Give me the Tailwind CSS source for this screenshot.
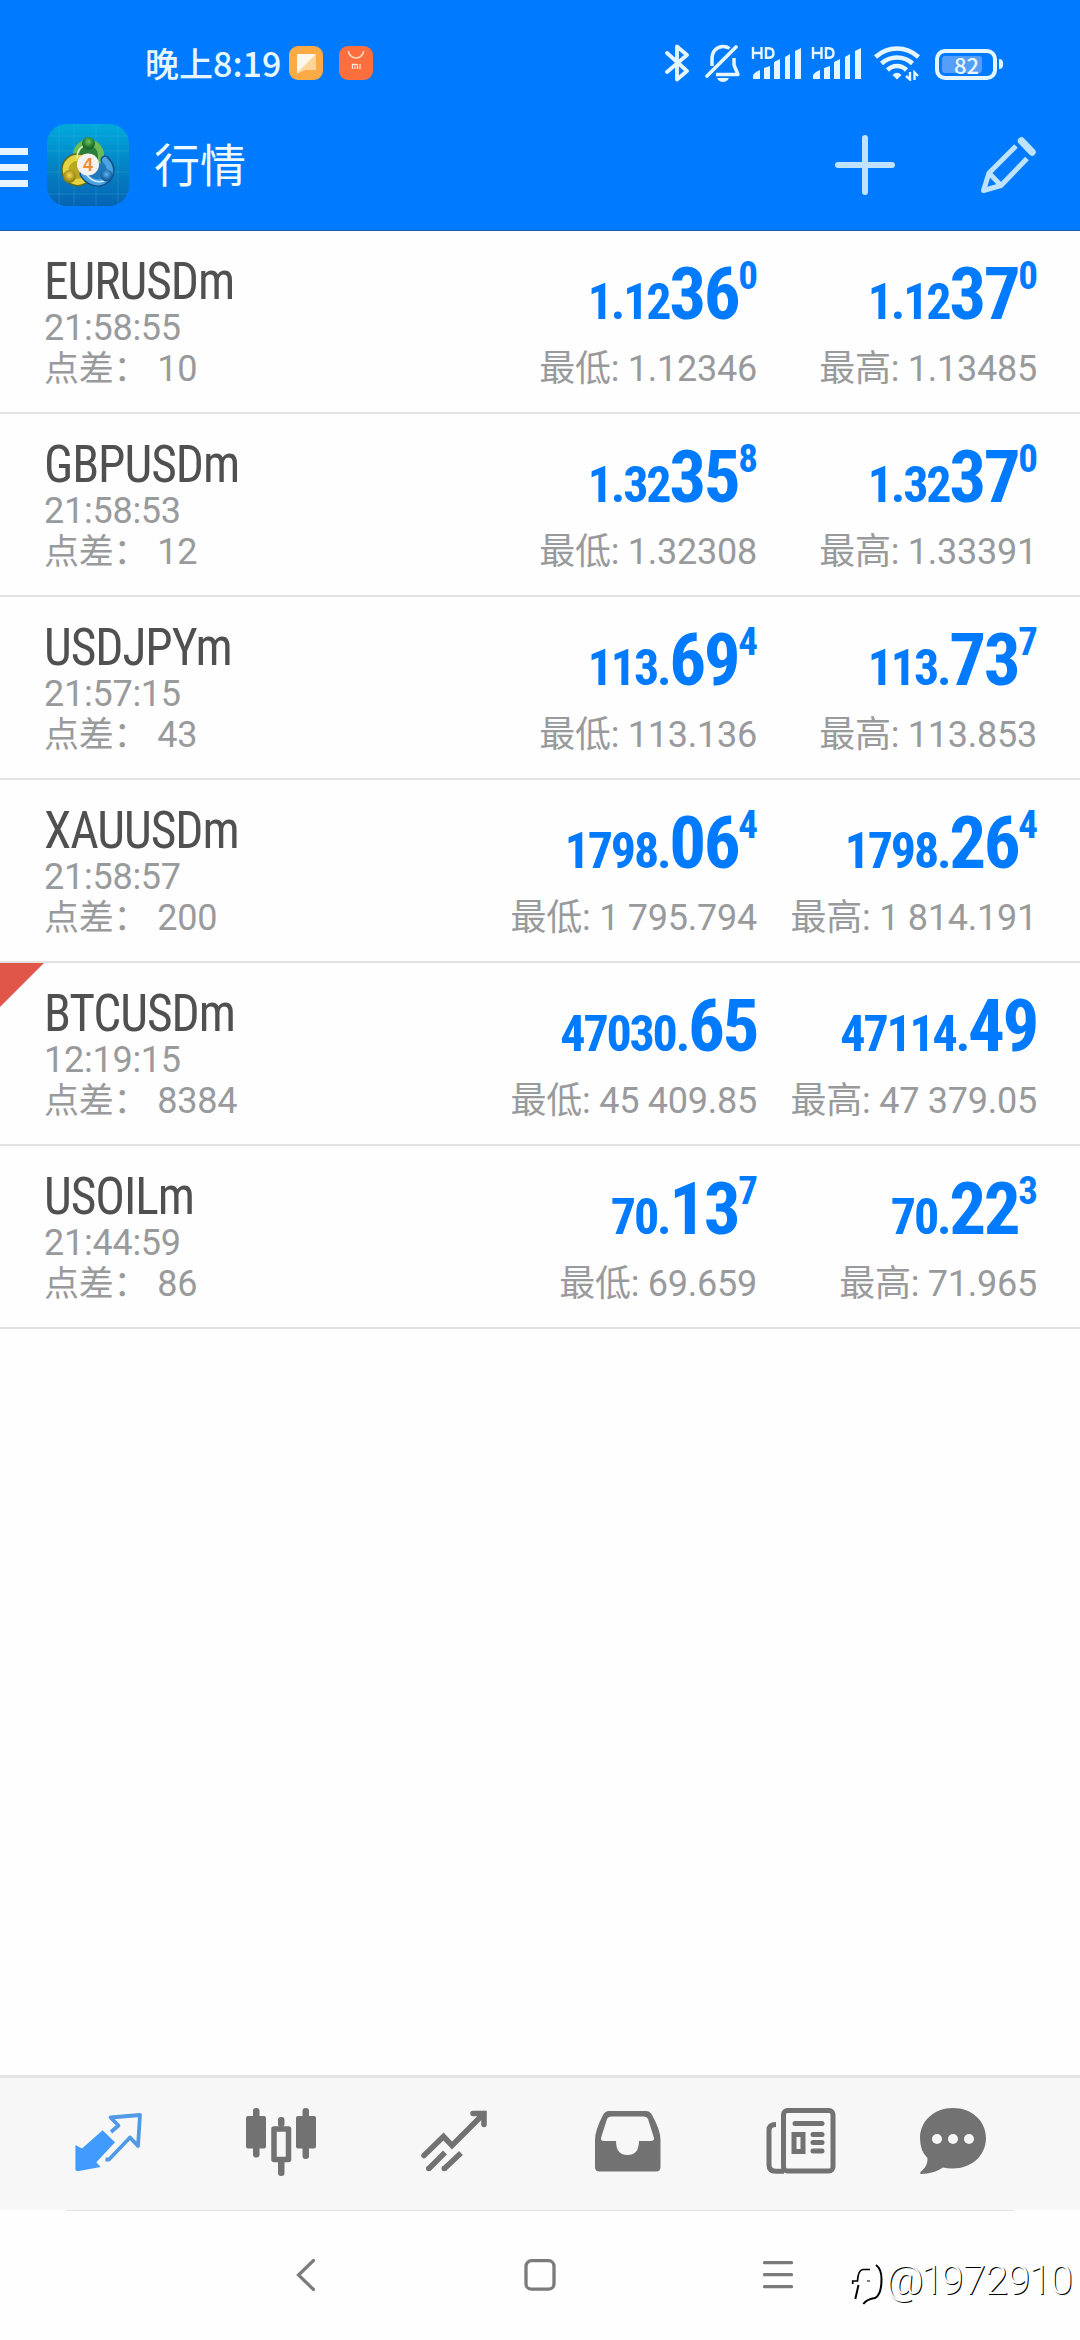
<!DOCTYPE html>
<html lang="zh">
<head>
<meta charset="utf-8">
<title>行情</title>
<script src="https://cdn.jsdelivr.net/npm/@tailwindcss/browser@4"></script>
</head>
<body class="bg-white">
<div class="relative flex h-[2340px] w-[1080px] flex-col overflow-hidden bg-[#fefefe] font-['Roboto','Noto_Sans_CJK_SC',sans-serif]">
  <header class="h-[231px] shrink-0 border-b border-[#1c5fa8] bg-[#007aff]">
    <div class="flex h-[124px] items-center pt-1.5 text-[#e6f6ff]">
      <div class="relative -top-0.5 ml-[145px] w-[135px] whitespace-nowrap font-['Noto_Sans_CJK_SC',sans-serif] text-[34px] leading-[40px] font-medium">晚上8:19</div>
      <svg class="relative -top-0.5 ml-[9px] size-[34px]" viewBox="0 0 34 34"><rect width="34" height="34" rx="9" fill="#fbab45"/><path d="M8 8H27V24H16L8 28Z" fill="#fdd49a"/><path d="M8 8H27L8 27Z" fill="#fff8ea"/></svg>
      <svg class="relative -top-0.5 ml-4 size-[34px]" viewBox="0 0 34 34"><rect width="34" height="34" rx="9" fill="#fc6e3d"/><path d="M9.500 5a7.500 7 0 0 0 15 0" fill="none" stroke="#ffd9c4" stroke-width="1.600"/><path d="M13.500 23V18.500H17.500Q18.500 18.500 18.500 20V23M16 20.500V23M21 18V23" fill="none" stroke="#ffe5d8" stroke-width="1.300"/></svg>
      <svg class="relative -top-0.5 ml-[292px] h-[40px] w-[25px]" viewBox="0 0 25 40"><path d="M2 10L22 28L12 36.500V3.500L22 12L2 29" fill="none" stroke="currentColor" stroke-width="3.800" stroke-linejoin="round" stroke-linecap="round"/></svg>
      <svg class="relative -top-0.5 ml-[15px] h-[40px] w-[36px]" viewBox="0 0 36 40"><path d="M7 23V16C7 8 12 3.500 18 3.500Q22 3.500 24.500 5.500M29 15V22L33 31.500H11" fill="none" stroke="currentColor" stroke-width="3.500" stroke-linejoin="round"/><path d="M2 33L31 4" stroke="currentColor" stroke-width="3.600" stroke-linecap="round"/><path d="M12 35H24Q22 39 18 39T12 35Z" fill="currentColor"/></svg>
      <svg class="relative -top-0.5 ml-[10px] h-[34px] w-[50px]" viewBox="0 0 50 34"><g fill="none" stroke="currentColor" stroke-width="2.400"><path d="M2 1V13M10.500 1V13M2 7H10.500M15 2.200V11.800H17.500Q22.500 11.800 22.500 7T17.500 2.200Z"/></g><g fill="currentColor"><path d="M2 33V30Q2 27 9 24V33ZM13 33V22L19 20V33ZM23 33V16L29 13V33ZM34 33V11L39 8V33ZM44 33V5L50 2V33Z"/></g></svg>
      <svg class="relative -top-0.5 ml-[10px] h-[34px] w-[50px]" viewBox="0 0 50 34"><g fill="none" stroke="currentColor" stroke-width="2.400"><path d="M2 1V13M10.500 1V13M2 7H10.500M15 2.200V11.800H17.500Q22.500 11.800 22.500 7T17.500 2.200Z"/></g><g fill="currentColor"><path d="M2 33V30Q2 27 9 24V33ZM13 33V22L19 20V33ZM23 33V16L29 13V33ZM34 33V11L39 8V33ZM44 33V5L50 2V33Z"/></g></svg>
      <svg class="relative -top-0.5 ml-[13px] h-[36px] w-[46px]" viewBox="0 0 46 36"><g fill="none" stroke="currentColor" stroke-width="4.600"><path d="M1.500 12Q11 3.500 23 3.500T44.500 12M7.500 18.500Q14 12.500 23 12.500T38.500 18.500M13.500 25Q17.500 21 23 21T32.500 25"/></g><path d="M18.500 30Q23 25.500 27.500 30L23 34.500Z" fill="currentColor"/><path d="M36 27V34.500L32 31M40.500 35V27.500L44 31" fill="none" stroke="currentColor" stroke-width="2.400"/></svg>
      <div class="relative -top-px ml-[15px] flex h-[31px] w-[62px] items-center rounded-[10px] border-4 border-current p-[3px]">
        <div class="relative h-full w-[40px] rounded-[3px] bg-[#559ffa]"><span class="absolute top-[-3px] left-[12px] font-['Noto_Sans_CJK_SC'] text-[22px] leading-[22px] font-medium">82</span></div>
      </div>
      <div class="relative -top-px ml-0.5 h-[10px] w-1 rounded-r-full bg-current"></div>
    </div>
    <div class="flex h-[82px] items-center">
      <div class="flex w-7 flex-col gap-[9px] pt-1"><div class="h-[7px] bg-[#e8f5ff]"></div><div class="h-[7px] bg-[#e8f5ff]"></div><div class="h-[7px] bg-[#e8f5ff]"></div></div>
      <svg class="ml-[19px] size-[82px]" viewBox="0 0 82 82">
        <defs>
          <linearGradient id="tile" x2="0" y2="1"><stop stop-color="#00a9dc"/><stop offset=".5" stop-color="#0385c5"/><stop offset="1" stop-color="#0663b4"/></linearGradient>
          <radialGradient id="green" cy=".35"><stop stop-color="#6fc35a"/><stop offset="1" stop-color="#176b2c"/></radialGradient>
          <radialGradient id="gold" cy=".4"><stop stop-color="#f2dc52"/><stop offset="1" stop-color="#94800e"/></radialGradient>
          <radialGradient id="sky" cy=".4"><stop stop-color="#5bb5ee"/><stop offset="1" stop-color="#125b9c"/></radialGradient>
        </defs>
        <rect width="82" height="82" rx="20" fill="url(#tile)"/>
        <path d="M12 0V82M27 0V82M49 0V82M71 0V82M0 12H82M0 27H82M0 48H82M0 70H82" stroke="#5cc5e8" stroke-opacity=".22" fill="none"/>
        <g fill="none" stroke-linecap="round">
          <path d="M29 38A12.500 12.500 0 1 1 54 38" stroke="#1f5e33" stroke-width="9"/><path d="M29 38V31A12.500 12.500 0 0 1 54 31V38" fill="#2b7f3a" stroke="#6cbb55" stroke-width="6"/>
          <path d="M33 34A12 12 0 1 0 37 56" stroke="#5c6a17" stroke-width="9"/><path d="M33 34A12 12 0 1 0 37 56" fill="#b9a722" stroke="#e3d340" stroke-width="6"/>
          <path d="M58 36Q66 44 61 53Q54 61 45 57Q40 55 37 50" stroke="#124f86" stroke-width="9"/><path d="M58 36Q66 44 61 53Q54 61 45 57Q40 55 37 50" fill="#1f78bb" stroke="#4ba3e2" stroke-width="6"/>
          <path d="M40 51Q47 60 57 57" stroke="#d9eefb" stroke-width="1.500"/><path d="M30 34Q30 22 41 21" stroke="#d6efb8" stroke-width="1.500"/>
        </g>
        <circle cx="41.500" cy="19.500" r="6.500" fill="url(#green)"/><circle cx="22.500" cy="52.500" r="6.500" fill="url(#gold)"/><circle cx="59.500" cy="51.500" r="6" fill="url(#sky)"/>
        <circle cx="41" cy="40.500" r="11" fill="#f4f1ee"/><text x="41" y="47" text-anchor="middle" font-family="Liberation Sans" font-size="18" font-weight="700" fill="#ee8b3c">4</text>
      </svg>
      <h1 class="relative top-[-3px] ml-[25px] flex-1 font-['Noto_Sans_CJK_SC',sans-serif] text-[46px] leading-[82px] text-[#effaff]">行情</h1>
      <svg class="size-[60px]" viewBox="0 0 60 60"><path d="M3 30H57M30 3V57" stroke="#bfe2ff" stroke-width="6" stroke-linecap="round"/></svg>
      <svg class="mr-[44px] ml-[86px] h-[56px] w-[55px]" viewBox="0 0 55 56"><g fill="none" stroke="#bfe2ff" stroke-width="5" stroke-linejoin="round"><path d="M35 9L8 36L2.500 53.500L20 48.500L46 21.500M8 36L20 48.500"/><path d="M40.500 4L51 15" stroke-width="7.500" stroke-linecap="round"/></g></svg>
    </div>
  </header>

  <main id="quotes" class="flex flex-1 flex-col"></main>

  <nav class="h-[135px] shrink-0 border-t-[3px] border-[#e4e4e4] bg-[#f7f7f7] text-[#727272]">
    <div class="flex h-full pt-[22px]">
      <svg class="ml-[70px] size-20" viewBox="70 2100 80 80"><path d="M75.400 2145L82 2148.500L102.600 2130.300L115 2142.300L96.400 2162.300L100.600 2167L77.500 2171.200L75.400 2170Z" fill="#419bff"/><path d="M111 2132L118.500 2125.500L110.500 2117.500L140 2115L138 2146L130 2137.500L109 2159.500H105.500" fill="none" stroke="#5299e6" stroke-width="3.800" stroke-linejoin="round"/></svg>
      <svg class="ml-[91px] size-20" viewBox="241 2100 80 80"><g fill="currentColor"><rect x="246" y="2116" width="20" height="32.500" rx="2"/><rect x="253" y="2108" width="6.500" height="49.500" rx="3"/><rect x="296" y="2116" width="20" height="32.500" rx="2"/><rect x="302.500" y="2108" width="6.500" height="51" rx="3"/><rect x="278" y="2117" width="6.500" height="10" rx="3"/><rect x="278" y="2160" width="6.500" height="16" rx="3"/></g><rect x="274" y="2129" width="14.500" height="30.500" fill="none" stroke="currentColor" stroke-width="5.500" stroke-linejoin="round"/></svg>
      <svg class="ml-[94px] size-20" viewBox="415 2100 80 80"><path d="M424 2155.500L443.500 2136.500L452 2145.500L484 2113.500M473 2113.500H484V2124.500" fill="none" stroke="currentColor" stroke-width="5.500" stroke-linecap="round"/><path d="M428.500 2169L445 2152.500M444 2169L461 2153" stroke="currentColor" stroke-width="5.500"/><circle cx="428.700" cy="2168.500" r="2.700" fill="currentColor"/><circle cx="444.200" cy="2168.500" r="2.700" fill="currentColor"/></svg>
      <svg class="ml-[93px] size-20" viewBox="588 2100 80 80"><path fill="currentColor" fill-rule="evenodd" d="M609 2111H646Q650 2111 652 2115Q660.500 2130 660.500 2140V2167Q660.500 2171.500 656 2171.500H599.500Q595 2171.500 595 2167V2140Q595 2130 603 2115Q605 2111 609 2111ZM611 2116.500Q608 2116.500 607 2119L601 2138Q600.500 2141 604 2141H616Q616 2155 627.500 2155T639 2141H650.500Q654.500 2141 654 2138L648 2119Q647 2116.500 644 2116.500Z"/></svg>
      <svg class="ml-[93px] size-20" viewBox="761 2100 80 80"><g fill="none" stroke="currentColor" stroke-width="5"><rect x="783.500" y="2110.500" width="49.500" height="60.500" rx="4"/><path d="M776 2124.500Q769 2124.500 769 2130V2165Q769 2171.200 776 2171.200H784"/><path d="M795 2123.500H822" stroke-linecap="round"/><rect x="794" y="2134.500" width="9" height="17" stroke-width="5"/><path d="M813 2134.500H822M813 2142.500H822M813 2151H822" stroke-linecap="round"/></g></svg>
      <svg class="ml-[74px] size-20" viewBox="915 2100 80 80"><path fill="currentColor" fill-rule="evenodd" d="M953 2108C972 2108 986 2121 986 2138C986 2156 971 2168.500 953 2168.500Q947 2168.500 943 2167.500Q934 2174 921 2174Q919 2173 921.500 2171Q928 2166 927.500 2158Q920 2151 920 2138C920 2121 934 2108 953 2108ZM937 2134A5 5 0 1 0 937 2144A5 5 0 1 0 937 2134ZM953 2134A5 5 0 1 0 953 2144A5 5 0 1 0 953 2134ZM969 2134A5 5 0 1 0 969 2144A5 5 0 1 0 969 2134Z"/></svg>
    </div>
  </nav>
  <footer class="relative h-[130px] shrink-0 bg-[#fefefe]">
    <div class="mx-auto h-px w-[948px] bg-[#e3e3e3]"></div>
    <div class="flex h-[128px] items-center text-[#7b7b7b]">
      <svg class="ml-[294px] size-9" viewBox="0 0 36 36"><path d="M19.500 3.500L4.500 18L19.500 32.500" fill="none" stroke="currentColor" stroke-width="3.200" stroke-linecap="round"/></svg>
      <svg class="ml-[192px] size-9" viewBox="0 0 36 36"><rect x="4" y="3.700" width="28" height="28.500" rx="5.500" fill="none" stroke="currentColor" stroke-width="3.300"/></svg>
      <svg class="ml-[202px] size-9" viewBox="0 0 36 36"><path d="M4.500 5.700H31.500M4.500 17.700H31.500M4.500 29.700H31.500" stroke="currentColor" stroke-width="3.300" stroke-linecap="round"/></svg>
    </div>
    <div class="absolute top-[49px] left-[850px] flex items-center">
      <svg class="h-[48px] w-[34px]" viewBox="0 0 34 48"><g fill="none" stroke="#000"><path d="M2.700 25V22H7.500Q8 11 13 10.500H20" stroke-width="1.700"/><path d="M8.500 26L5.300 40" stroke-width="2"/><path d="M26 6Q31.500 10 31.500 20Q31.500 36 25 39Q17 40 13.300 45" stroke-width="2"/><path d="M17 22H20" stroke-width="1"/></g></svg>
      <span class="relative top-[-3px] ml-0.5 flex text-[41px] leading-[48px] font-light whitespace-nowrap text-white [text-shadow:1px_1px_0.500px_#000]"><span class="tracking-[-2.500px]">@</span><span class="tracking-[-3px]">1</span><span class="tracking-[-0.500px]">972</span><span class="tracking-[-1.500px]">91</span><span class="tracking-[-0.500px]">0</span></span>
    </div>
  </footer>
</div>
<script>
const quotes = [
  ["EURUSDm","21:58:55","10",["1.12","36","0"],"1.12346",["1.12","37","0"],"1.13485"],
  ["GBPUSDm","21:58:53","12",["1.32","35","8"],"1.32308",["1.32","37","0"],"1.33391"],
  ["USDJPYm","21:57:15","43",["113.","69","4"],"113.136",["113.","73","7"],"113.853"],
  ["XAUUSDm","21:58:57","200",["1798.","06","4"],"1 795.794",["1798.","26","4"],"1 814.191"],
  ["BTCUSDm","12:19:15","8384",["47030.","65",""],"45 409.85",["47114.","49",""],"47 379.05"],
  ["USOILm","21:44:59","86",["70.","13","7"],"69.659",["70.","22","3"],"71.965"],
];
const price = ([a, b, c]) => `<div class="flex h-[102px] items-baseline justify-end pt-[23px] font-['Roboto_Condensed','Roboto',sans-serif] font-bold text-[#007aff]"><span class="text-[50px] leading-[80px] tracking-[-2.2px]">${a}</span><span class="text-[73px] leading-[80px] tracking-[-2.4px]">${b}</span>${c ? `<span class="relative top-[-30px] text-[39px] leading-[40px] tracking-[-1px]">${c}</span>` : ""}</div>`;
document.getElementById("quotes").innerHTML = quotes.map(([name, time, spread, bid, low, ask, high]) => `
  <section class="relative flex h-[183px] border-b-2 border-[#e2e2e2] pr-[43px] pl-11 text-4xl tracking-[-0.25px] text-[#999a9c]">
    ${name === "BTCUSDm" ? '<svg class="absolute top-0 left-0 h-[44px] w-[44px]" viewBox="0 0 44 44"><path d="M0 0H44L0 44Z" fill="#e0574a"/></svg>' : ""}
    <div class="flex-1 pt-[21px] whitespace-nowrap">
      <div class="origin-left scale-x-[0.97] font-['Roboto_Condensed','Roboto',sans-serif] text-[51px] leading-[60px] tracking-[-1.1px] text-[#505050]">${name}</div>
      <div class="leading-[32px]">${time}</div>
      <div class="leading-[50px]"><span class="text-[35px]">点差：</span><span class="ml-[9px]">${spread}</span></div>
    </div>
    <div class="w-[280px] text-right whitespace-nowrap">${price(bid)}<div class="leading-[72px]">最低: ${low}</div></div>
    <div class="w-[280px] text-right whitespace-nowrap">${price(ask)}<div class="leading-[72px]">最高: ${high}</div></div>
  </section>`).join("");
</script>
</body>
</html>
